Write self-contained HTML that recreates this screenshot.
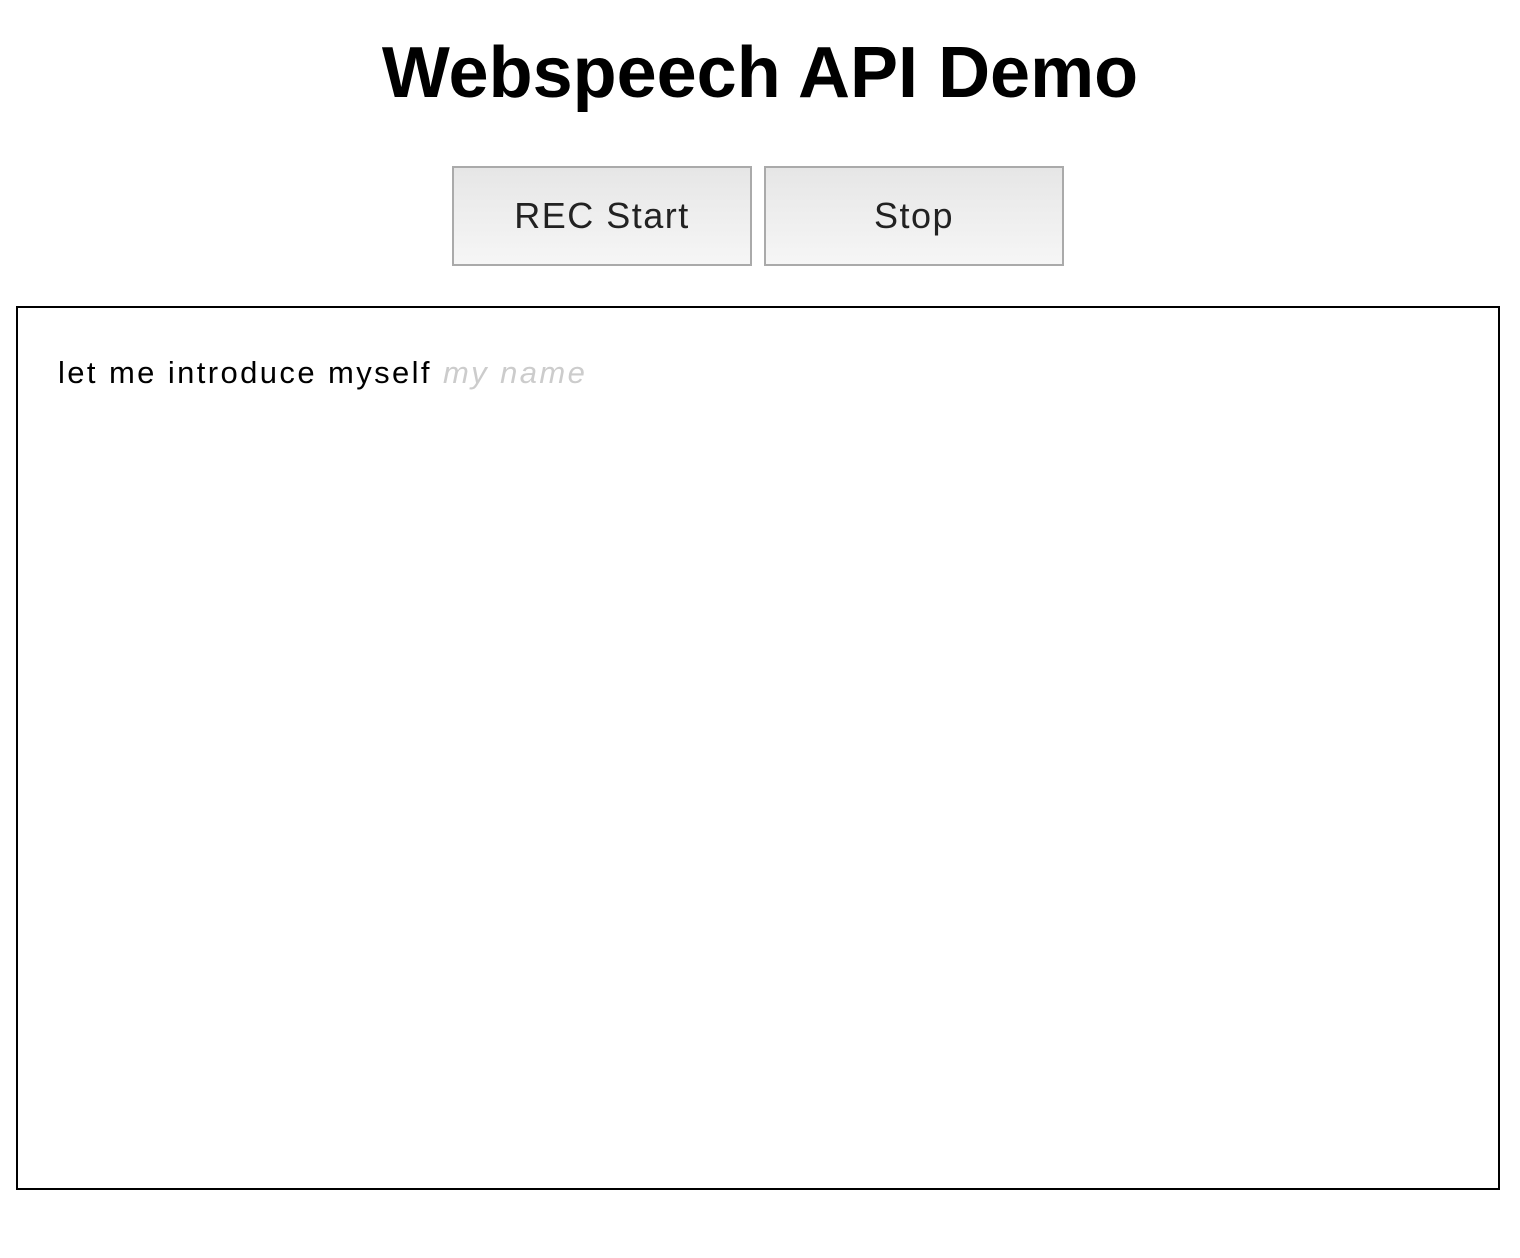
<!DOCTYPE html>
<html><head><meta charset="utf-8"><style>
html,body{margin:0;padding:0;background:#fff;width:1520px;height:1258px;overflow:hidden;font-family:"Liberation Sans",sans-serif;}
h1{position:absolute;left:0;width:1520px;top:28px;margin:0;text-align:center;font-size:72px;font-weight:bold;line-height:90px;color:#000;}
.btn{position:absolute;top:166px;width:296px;height:96px;border:2px solid #aaa;background:linear-gradient(#e6e6e6,#f6f6f6);font-size:36px;letter-spacing:1.5px;color:#222;text-align:center;line-height:96px;}
.box{position:absolute;left:16px;top:306px;width:1480px;height:880px;border:2px solid #000;}
.txt{position:absolute;left:40px;top:45px;font-size:31px;letter-spacing:2.4px;line-height:40px;color:#000;}
.txt i{color:#ccc;}
</style></head><body>
<h1>Webspeech API Demo</h1>
<div class="btn" style="left:452px">REC Start</div>
<div class="btn" style="left:764px">Stop</div>
<div class="box"><div class="txt">let me introduce myself <i>my name</i></div></div>
</body></html>
